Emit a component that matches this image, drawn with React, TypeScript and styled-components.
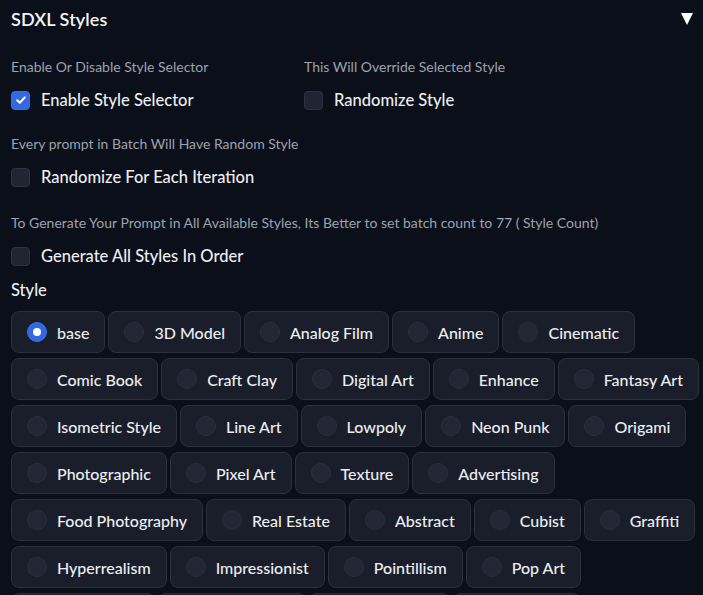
import React, { useState } from "react";
import styled, { createGlobalStyle } from "styled-components";

const Global = createGlobalStyle`
  html, body {
    margin: 0;
    padding: 0;
    background: #0b0f19;
    overflow: hidden;
  }
  body {
    font-family: Lato, "Noto Sans", sans-serif;
    color: #e5e7eb;
  }
`;

const Page = styled.div`
  width: 703px;
  height: 595px;
  overflow: hidden;
  background: #0b0f19;
  box-sizing: border-box;
  padding: 0 8px 0 11px;
`;

const Header = styled.div`
  display: flex;
  align-items: center;
  justify-content: space-between;
  height: 24px;
  padding-top: 7px;
  padding-right: 2px;
`;

const Title = styled.div`
  font-size: 18px;
  font-weight: 600;
  color: #f3f4f6;
  letter-spacing: 0.1px;
`;

const Caret = styled.div`
  width: 0;
  height: 0;
  border-left: 6.5px solid transparent;
  border-right: 6.5px solid transparent;
  border-top: 12px solid #ffffff;
`;

const Row = styled.div<{ $mt: number }>`
  display: flex;
  margin-top: ${(p) => p.$mt}px;
`;

const Field = styled.div<{ $w?: number }>`
  display: flex;
  flex-direction: column;
  width: ${(p) => (p.$w ? `${p.$w}px` : "auto")};
`;

const Hint = styled.div`
  font-size: 14px;
  line-height: 18px;
  color: #9ca3af;
  margin-bottom: 12px;
  white-space: nowrap;
`;

const CheckLine = styled.label`
  display: flex;
  align-items: center;
  gap: 11px;
  height: 24px;
  font-size: 16.5px;
  font-weight: 500;
  color: #eceef2;
`;

const Box = styled.span<{ $on: boolean }>`
  width: 19px;
  height: 19px;
  box-sizing: border-box;
  border-radius: 4px;
  background: ${(p) => (p.$on ? "#3468e0" : "#1f2533")};
  border: 1px solid ${(p) => (p.$on ? "#3a6ee6" : "#2c3342")};
  display: flex;
  align-items: center;
  justify-content: center;
`;

const StyleLabel = styled.div`
  margin-top: 11px;
  font-size: 16.5px;
  font-weight: 500;
  line-height: 22px;
  color: #eceef2;
`;

const PillGrid = styled.div`
  display: flex;
  flex-direction: column;
  gap: 5px;
  margin-top: 10px;
`;

const PillRow = styled.div`
  display: flex;
  gap: 3px;
`;

const Pill = styled.label`
  display: flex;
  align-items: center;
  gap: 10px;
  height: 42px;
  box-sizing: border-box;
  padding: 0 15px 0 15px;
  border-radius: 8px;
  background: #191e2a;
  border: 1px solid #2a303c;
  font-size: 16px;
  font-weight: 500;
  color: #eceef2;
  white-space: nowrap;
  flex-shrink: 0;
  cursor: pointer;
`;

const Dot = styled.span<{ $on: boolean }>`
  width: 20px;
  height: 20px;
  box-sizing: border-box;
  border-radius: 50%;
  background: ${(p) => (p.$on ? "#3468e0" : "#222735")};
  border: 1px solid ${(p) => (p.$on ? "#3a6ee6" : "#2a2f3c")};
  display: flex;
  align-items: center;
  justify-content: center;
  &::after {
    content: "";
    display: ${(p) => (p.$on ? "block" : "none")};
    width: 8px;
    height: 8px;
    border-radius: 50%;
    background: #ffffff;
  }
`;

const Check = () => (
  <svg width="12" height="12" viewBox="0 0 12 12">
    <path d="M2.2 6.3 L4.8 8.7 L9.8 3.4" fill="none" stroke="#fff" strokeWidth="2" strokeLinecap="round" strokeLinejoin="round" />
  </svg>
);

const CheckItem = ({ on, text }: { on: boolean; text: string }) => (
  <CheckLine>
    <Box $on={on}>{on && <Check />}</Box>
    {text}
  </CheckLine>
);

const STYLE_ROWS = [
  ["base", "3D Model", "Analog Film", "Anime", "Cinematic"],
  ["Comic Book", "Craft Clay", "Digital Art", "Enhance", "Fantasy Art"],
  ["Isometric Style", "Line Art", "Lowpoly", "Neon Punk", "Origami"],
  ["Photographic", "Pixel Art", "Texture", "Advertising"],
  ["Food Photography", "Real Estate", "Abstract", "Cubist", "Graffiti"],
  ["Hyperrealism", "Impressionist", "Pointillism", "Pop Art"],
  ["Psychedelic", "Renaissance", "Steampunk", "Surrealist"],
];

export default function App() {
  const [sel, setSel] = useState("base");
  return (
    <>
      <Global />
      <Page>
        <Header>
          <Title>SDXL Styles</Title>
          <Caret />
        </Header>
        <Row $mt={27}>
          <Field $w={293}>
            <Hint>Enable Or Disable Style Selector</Hint>
            <CheckItem on={true} text="Enable Style Selector" />
          </Field>
          <Field>
            <Hint>This Will Override Selected Style</Hint>
            <CheckItem on={false} text="Randomize Style" />
          </Field>
        </Row>
        <Row $mt={23}>
          <Field>
            <Hint>Every prompt in Batch Will Have Random Style</Hint>
            <CheckItem on={false} text="Randomize For Each Iteration" />
          </Field>
        </Row>
        <Row $mt={25}>
          <Field>
            <Hint>To Generate Your Prompt in All Available Styles, Its Better to set batch count to 77 ( Style Count)</Hint>
            <CheckItem on={false} text="Generate All Styles In Order" />
          </Field>
        </Row>
        <StyleLabel>Style</StyleLabel>
        <PillGrid>
          {STYLE_ROWS.map((row, i) => (
            <PillRow key={i}>
              {row.map((s) => (
                <Pill key={s} onClick={() => setSel(s)}>
                  <Dot $on={sel === s} />
                  {s}
                </Pill>
              ))}
            </PillRow>
          ))}
        </PillGrid>
      </Page>
    </>
  );
}
